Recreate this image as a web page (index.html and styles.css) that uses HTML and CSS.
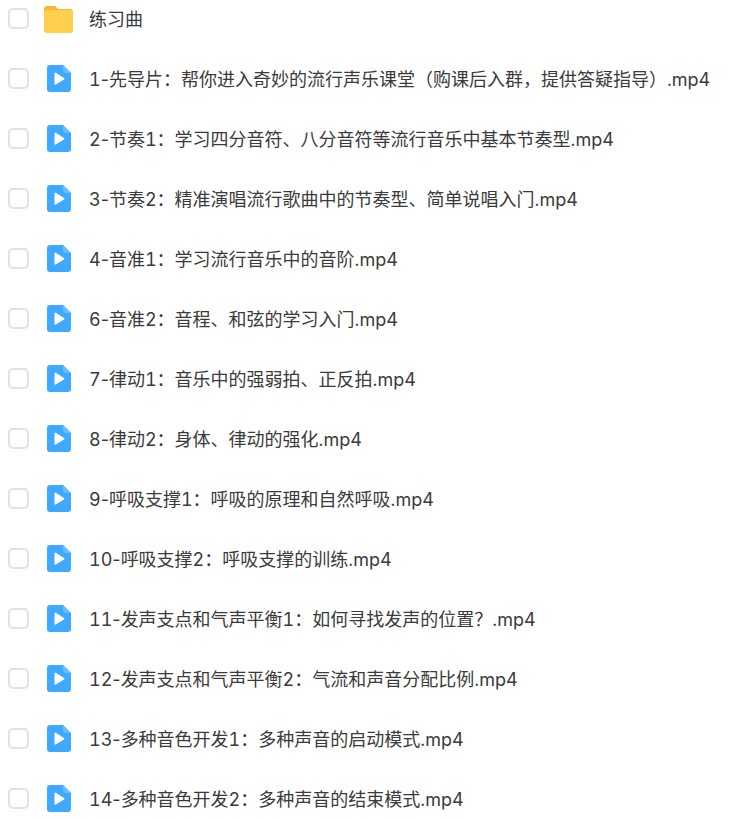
FILE: index.html
```html
<!DOCTYPE html>
<html lang="zh-CN">
<head>
  <meta charset="UTF-8" />
  <meta name="viewport" content="width=device-width, initial-scale=1.0"/>
  <title>文件列表</title>
  <link rel="stylesheet" href="styles.css">
</head>
<body>
  <svg class="defs" width="0" height="0">
    <symbol id="video" viewBox="0 0 24 27">
      <path d="M3 0H16L24 8V24a3 3 0 0 1-3 3H3a3 3 0 0 1-3-3V3a3 3 0 0 1 3-3Z" fill="#3fa9ff"/>
      <path d="M16 0L24 8H19a3 3 0 0 1-3-3Z" fill="#6cbcff"/>
      <path d="M7.500 8.500a.8 .8 0 0 1 1.200-.7L17 13a.8 .8 0 0 1 0 1.400L8.700 19.600a.8 .8 0 0 1-1.200-.7Z" fill="#fff"/>
    </symbol>
  </svg>

  <ul class="file-list">
    <li class="file">
      <span class="check"></span>
      <svg class="icon folder" viewBox="0 0 29 27" width="29" height="27">
        <path d="M3 0H11L14.500 3H26a3 3 0 0 1 3 3V8H0V3a3 3 0 0 1 3-3Z" fill="#f5b72e"/>
        <rect x="0" y="4" width="29" height="23" rx="2.500" fill="#ffd04f"/>
      </svg>
      <span class="name">练习曲</span>
    </li>
    <li class="file"><span class="check"></span><svg class="icon video"><use href="#video"/></svg><span class="name">1<span class="dash">-</span>先导片：帮你进入奇妙的流行声乐课堂（购课后入群，提供答疑指导）.mp4</span></li>
    <li class="file"><span class="check"></span><svg class="icon video"><use href="#video"/></svg><span class="name">2<span class="dash">-</span>节奏1：学习四分音符、八分音符等流行音乐中基本节奏型.mp4</span></li>
    <li class="file"><span class="check"></span><svg class="icon video"><use href="#video"/></svg><span class="name">3<span class="dash">-</span>节奏2：精准演唱流行歌曲中的节奏型、简单说唱入门.mp4</span></li>
    <li class="file"><span class="check"></span><svg class="icon video"><use href="#video"/></svg><span class="name">4<span class="dash">-</span>音准1：学习流行音乐中的音阶.mp4</span></li>
    <li class="file"><span class="check"></span><svg class="icon video"><use href="#video"/></svg><span class="name">6<span class="dash">-</span>音准2：音程、和弦的学习入门.mp4</span></li>
    <li class="file"><span class="check"></span><svg class="icon video"><use href="#video"/></svg><span class="name">7<span class="dash">-</span>律动1：音乐中的强弱拍、正反拍.mp4</span></li>
    <li class="file"><span class="check"></span><svg class="icon video"><use href="#video"/></svg><span class="name">8<span class="dash">-</span>律动2：身体、律动的强化.mp4</span></li>
    <li class="file"><span class="check"></span><svg class="icon video"><use href="#video"/></svg><span class="name">9<span class="dash">-</span>呼吸支撑1：呼吸的原理和自然呼吸.mp4</span></li>
    <li class="file"><span class="check"></span><svg class="icon video"><use href="#video"/></svg><span class="name">10<span class="dash">-</span>呼吸支撑2：呼吸支撑的训练.mp4</span></li>
    <li class="file"><span class="check"></span><svg class="icon video"><use href="#video"/></svg><span class="name">11<span class="dash">-</span>发声支点和气声平衡1：如何寻找发声的位置？.mp4</span></li>
    <li class="file"><span class="check"></span><svg class="icon video"><use href="#video"/></svg><span class="name">12<span class="dash">-</span>发声支点和气声平衡2：气流和声音分配比例.mp4</span></li>
    <li class="file"><span class="check"></span><svg class="icon video"><use href="#video"/></svg><span class="name">13<span class="dash">-</span>多种音色开发1：多种声音的启动模式.mp4</span></li>
    <li class="file"><span class="check"></span><svg class="icon video"><use href="#video"/></svg><span class="name">14<span class="dash">-</span>多种音色开发2：多种声音的结束模式.mp4</span></li>
  </ul>
</body>
</html>
```

FILE: styles.css
```css
html, body {
  height: 100%;
}

body {
  font-family: Inter, "Noto Sans CJK SC", sans-serif;
  margin: 0;
  background: white;
  color: #3a3a3a;
  overflow: hidden;
}

.defs {
  display: block;
}

.file-list {
  list-style: none;
  margin: -11.5px 0 0;
  padding: 0 0 0 8px;
}

.file {
  display: flex;
  align-items: center;
  height: 60px;
}

.check {
  width: 17px;
  height: 17px;
  border: 2px solid #e2e2e2;
  border-radius: 5px;
  flex: none;
}

.icon {
  flex: none;
  margin-left: 15px;
  margin-right: 16px;
}

.folder {
  margin-top: 2px;
}

.video {
  width: 24px;
  height: 27px;
  margin-left: 18px;
  margin-right: 18px;
}

.name {
  font-size: 18px;
  font-variant-numeric: tabular-nums;
  line-height: 26px;
  padding-top: 2px;
  white-space: nowrap;
}

.dash {
  font-variant-numeric: normal;
}
```
